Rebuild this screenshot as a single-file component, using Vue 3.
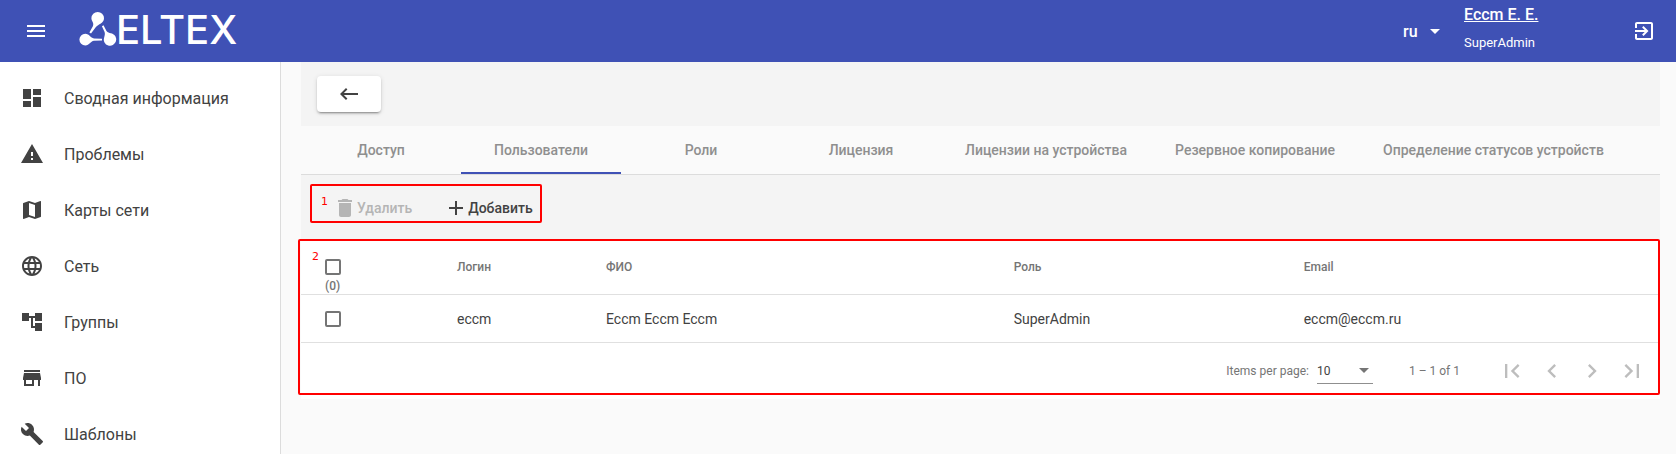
<script setup>
import { ref, computed } from "vue";

const menu = [
  {
    title: "Сводная информация",
    icon: "M3 13h8V3H3v10zm0 8h8v-6H3v6zm10 0h8V11h-8v10zm0-18v6h8V3h-8z",
  },
  {
    title: "Проблемы",
    icon: "M1 21h22L12 2 1 21zm12-3h-2v-2h2v2zm0-4h-2v-4h2v4z",
  },
  {
    title: "Карты сети",
    icon: "M20.5 3l-.16.03L15 5.1 9 3 3.36 4.9c-.21.07-.36.25-.36.48V20.5c0 .28.22.5.5.5l.16-.03L9 18.9l6 2.1 5.64-1.9c.21-.07.36-.25.36-.48V3.5c0-.28-.22-.5-.5-.5zM15 19l-6-2.11V5l6 2.11V19z",
  },
  {
    title: "Сеть",
    icon: "M11.99 2C6.47 2 2 6.48 2 12s4.47 10 9.99 10C17.52 22 22 17.52 22 12S17.52 2 11.99 2zm6.93 6h-2.95c-.32-1.25-.78-2.45-1.38-3.56 1.84.63 3.37 1.91 4.33 3.56zM12 4.04c.83 1.2 1.48 2.53 1.91 3.96h-3.82c.43-1.43 1.08-2.76 1.91-3.96zM4.26 14C4.1 13.36 4 12.69 4 12s.1-1.36.26-2h3.38c-.08.66-.14 1.32-.14 2 0 .68.06 1.34.14 2H4.26zm.82 2h2.95c.32 1.25.78 2.45 1.38 3.56-1.84-.63-3.37-1.9-4.33-3.56zm2.95-8H5.08c.96-1.66 2.49-2.93 4.33-3.56C8.81 5.55 8.35 6.75 8.03 8zM12 19.96c-.83-1.2-1.48-2.53-1.91-3.96h3.82c-.43 1.43-1.08 2.76-1.91 3.96zM14.34 14H9.66c-.09-.66-.16-1.32-.16-2 0-.68.07-1.35.16-2h4.68c.09.65.16 1.32.16 2 0 .68-.07 1.34-.16 2zm.25 5.56c.6-1.11 1.06-2.31 1.38-3.56h2.95c-.96 1.65-2.49 2.93-4.33 3.56zM16.36 14c.08-.66.14-1.32.14-2 0-.68-.06-1.34-.14-2h3.38c.16.64.26 1.31.26 2s-.1 1.36-.26 2h-3.38z",
  },
  {
    title: "Группы",
    icon: "M22 11V3h-7v3H9V3H2v8h7V8h2v10h4v3h7v-8h-7v3h-2V8h2v3z",
  },
  {
    title: "ПО",
    icon: "M20 4H4v2h16V4zm1 10v-2l-1-5H4l-1 5v2h1v6h10v-6h4v6h2v-6h1zm-9 4H6v-4h6v4z",
  },
  {
    title: "Шаблоны",
    icon: "M22.7 19l-9.1-9.1c.9-2.3.4-5-1.5-6.9-2-2-5-2.4-7.4-1.3L9 6 6 9 1.6 4.7C.4 7.1.9 10.1 2.9 12.1c1.9 1.9 4.6 2.4 6.9 1.5l9.1 9.1c.4.4 1 .4 1.4 0l2.3-2.3c.5-.4.5-1.1.1-1.4z",
  },
];

const tabs = [
  "Доступ",
  "Пользователи",
  "Роли",
  "Лицензия",
  "Лицензии на устройства",
  "Резервное копирование",
  "Определение статусов устройств",
];
const activeTab = ref("Пользователи");

const users = [
  { login: "eccm", name: "Eccm Eccm Eccm", role: "SuperAdmin", email: "eccm@eccm.ru" },
];
const selected = ref([]);
const allSelected = computed({
  get: () => selected.value.length === users.length,
  set: (value) => {
    selected.value = value ? users.map((user) => user.login) : [];
  },
});

const pages = [
  {
    title: "First page",
    icon: "M18.41 16.59L13.82 12l4.59-4.59L17 6l-6 6 6 6zM6 6h2v12H6z",
  },
  {
    title: "Previous page",
    icon: "M15.41 7.41L14 6l-6 6 6 6 1.41-1.41L10.83 12z",
  },
  {
    title: "Next page",
    icon: "M10 6L8.59 7.41 13.17 12l-4.58 4.59L10 18l6-6z",
  },
  {
    title: "Last page",
    icon: "M5.59 7.41L10.18 12l-4.59 4.59L7 18l6-6-6-6zM16 6h2v12h-2z",
  },
];

const lang = ref("ru");
const pageSize = ref(10);
</script>

<template>
  <div class="layout">
    <header class="header">
      <button class="icon-button" aria-label="Меню">
        <svg class="icon" viewBox="0 0 24 24">
          <path d="M3 18h18v-2H3v2zm0-5h18v-2H3v2zm0-7v2h18V6H3z" />
        </svg>
      </button>
      <svg class="logo" viewBox="0 -6 168 50">
        <path
          d="M18.700 2a6.300 6.300 0 0 1 6.300 6.300c0 5-5.500 5.700-8.500 9.200l-4.500 6-1.600-1 3.600-6.500c1.200-3.600-1.600-4.600-1.600-7.700A6.300 6.300 0 0 1 18.700 2z"
        />
        <path
          d="M6.300 23.700c4.200 0 5 4.200 8.700 4.700l8 .3v1.800l-8 .3c-3.700.5-4.500 4.700-8.700 4.700a5.900 5.900 0 0 1 0-11.800z"
        />
        <path
          d="M24.500 15.300l3 5.700c2.400 3.200 6.200.800 9 5.600a6.200 6.200 0 1 1-11 5.800c-2-4 1.300-6.500.1-10.400l-2.700-5.800z"
        />
        <text x="37" y="34">ELTEX</text>
      </svg>
      <label class="lang">
        <select v-model="lang" aria-label="Язык">
          <option>ru</option>
        </select>
        <span class="arrow"></span>
      </label>
      <div class="user">
        <a href="#">Eccm E. E.</a>
        <span>SuperAdmin</span>
      </div>
      <button class="icon-button" aria-label="Выход">
        <svg class="icon" viewBox="0 0 24 24">
          <path
            d="M10.090 15.590L11.500 17l5-5-5-5-1.410 1.410L12.670 11H3v2h9.670l-2.580 2.590zM19 3H5c-1.110 0-2 .9-2 2v4h2V5h14v14H5v-4H3v4c0 1.100.89 2 2 2h14c1.100 0 2-.9 2-2V5c0-1.100-.9-2-2-2z"
          />
        </svg>
      </button>
    </header>

    <div class="body">
      <nav class="sidebar">
        <a class="menu-item" href="#" v-for="item in menu" :key="item.title">
          <svg class="icon" viewBox="0 0 24 24"><path :d="item.icon" /></svg>
          {{ item.title }}
        </a>
      </nav>

      <main class="content">
        <div class="back-bar">
          <button class="back" aria-label="Назад">
            <svg class="icon" viewBox="0 0 24 24">
              <path d="M21 11H6.830l3.580-3.590L9 6l-6 6 6 6 1.410-1.410L6.830 13H21z" />
            </svg>
          </button>
        </div>

        <div class="tabs" role="tablist">
          <button
            v-for="tab in tabs"
            :key="tab"
            role="tab"
            :aria-selected="tab === activeTab"
            :class="['tab', tab === activeTab && 'active']"
            @click="activeTab = tab"
          >
            {{ tab }}
          </button>
        </div>

        <div class="toolbar">
          <button class="action" :disabled="selected.length === 0">
            <svg class="icon" viewBox="0 0 24 24">
              <path d="M6 19c0 1.100.9 2 2 2h8c1.100 0 2-.9 2-2V7H6v12zM19 4h-3.500l-1-1h-5l-1 1H5v2h14V4z" />
            </svg>
            Удалить
          </button>
          <button class="action">
            <svg class="icon" viewBox="0 0 24 24">
              <path d="M19 13h-6v6h-2v-6H5v-2h6V5h2v6h6v2z" />
            </svg>
            Добавить
          </button>
          <div class="mark mark-toolbar">1</div>
        </div>

        <section class="panel">
          <table>
            <colgroup>
              <col class="col-check" />
              <col class="col-login" />
              <col class="col-name" />
              <col class="col-role" />
              <col />
            </colgroup>
            <thead>
              <tr>
                <th>
                  <label class="check-all">
                    <input type="checkbox" v-model="allSelected" aria-label="Выбрать все" />
                    <span>({{ selected.length }})</span>
                  </label>
                </th>
                <th>Логин</th>
                <th>ФИО</th>
                <th>Роль</th>
                <th>Email</th>
              </tr>
            </thead>
            <tbody>
              <tr v-for="user in users" :key="user.login">
                <td>
                  <input
                    type="checkbox"
                    v-model="selected"
                    :value="user.login"
                    :aria-label="user.login"
                  />
                </td>
                <td>{{ user.login }}</td>
                <td>{{ user.name }}</td>
                <td>{{ user.role }}</td>
                <td>{{ user.email }}</td>
              </tr>
            </tbody>
          </table>

          <div class="paginator">
            <label for="page-size">Items per page:</label>
            <div class="page-size">
              <select id="page-size" v-model="pageSize">
                <option :value="10">10</option>
                <option :value="20">20</option>
                <option :value="50">50</option>
              </select>
              <span class="arrow"></span>
            </div>
            <span class="range">1 – 1 of 1</span>
            <button
              class="page-button"
              v-for="page in pages"
              :key="page.title"
              :aria-label="page.title"
              disabled
            >
              <svg viewBox="0 0 24 24"><path :d="page.icon" /></svg>
            </button>
          </div>
          <div class="mark mark-table">2</div>
        </section>
      </main>
    </div>
  </div>
</template>

<style>
body {
  margin: 0;
  background: #fafafa;
}
</style>

<style scoped>
.layout {
  height: 100vh;
  display: flex;
  flex-direction: column;
  overflow: hidden;
  font-family: Roboto, "Liberation Sans", sans-serif;
  font-size: 14px;
  color: #424242;
}

.layout * {
  box-sizing: border-box;
}

button,
select {
  margin: 0;
  padding: 0;
  border: none;
  background: none;
  font: inherit;
  color: inherit;
}

select {
  appearance: none;
  outline: none;
}

svg {
  display: block;
  flex-shrink: 0;
  fill: currentColor;
}

.icon {
  width: 24px;
  height: 24px;
}

.arrow {
  border: 5px solid transparent;
  border-top-color: currentColor;
  border-bottom: none;
  pointer-events: none;
}

.header {
  height: 62px;
  flex-shrink: 0;
  display: flex;
  align-items: center;
  padding: 0 20px 0 24px;
  background: #3f51b5;
  color: #fff;
  font-weight: 500;
}

.logo {
  width: 168px;
  height: 50px;
  margin: 0 auto 4px 31px;
}

.logo text {
  font-family: Inter, sans-serif;
  font-size: 40px;
  font-weight: 500;
}

.lang {
  display: flex;
  align-items: center;
  gap: 12px;
  margin-right: 24px;
  font-size: 16px;
}

.user {
  width: 168px;
  display: flex;
  flex-direction: column;
  align-items: flex-start;
  padding-bottom: 4px;
  font-size: 13px;
  font-weight: 400;
  line-height: 28px;
}

.user a {
  font-size: 16px;
  font-weight: 500;
  color: inherit;
}

.body {
  flex: 1;
  min-height: 0;
  display: flex;
}

.sidebar {
  width: 281px;
  flex-shrink: 0;
  padding-top: 8px;
  border-right: 1px solid #dcdcdc;
  background: #fff;
  overflow: hidden;
}

.menu-item {
  height: 56px;
  display: flex;
  align-items: center;
  gap: 20px;
  padding: 0 20px;
  font-size: 16px;
  color: inherit;
  text-decoration: none;
}

.content {
  flex: 1;
  min-width: 0;
  padding: 0 16px 0 20px;
}

.back-bar {
  height: 64px;
  padding: 14px 16px;
  background: #f4f4f4;
}

.back {
  width: 64px;
  height: 36px;
  display: flex;
  align-items: center;
  justify-content: center;
  border-radius: 4px;
  background: #fff;
  box-shadow:
    0 3px 1px -2px rgba(0, 0, 0, 0.2),
    0 2px 2px 0 rgba(0, 0, 0, 0.14),
    0 1px 5px 0 rgba(0, 0, 0, 0.12);
}

.tabs {
  display: flex;
  border-bottom: 1px solid #dcdcdc;
}

.tab {
  min-width: 160px;
  height: 48px;
  padding: 2px 24px 0;
  border-bottom: 2px solid transparent;
  font-weight: 500;
  color: #8f8f8f;
  white-space: nowrap;
}

.tab.active {
  border-color: #3f51b5;
}

.toolbar {
  position: relative;
  height: 65px;
  display: flex;
  align-items: center;
  padding-left: 16px;
  background: #f4f4f4;
}

.action {
  height: 36px;
  display: flex;
  align-items: center;
  padding: 0 16px;
  font-weight: 500;
}

.action:disabled {
  color: #b5b5b5;
}

.panel {
  position: relative;
  background: #fff;
}

table {
  width: 100%;
  table-layout: fixed;
  border-collapse: separate;
  border-spacing: 0;
}

.col-check {
  width: 156px;
}

.col-login {
  width: 149px;
}

.col-name {
  width: 30%;
}

.col-role {
  width: 290px;
}

th,
td {
  padding: 0;
  border-bottom: 1px solid #e0e0e0;
  text-align: left;
}

th:first-child,
td:first-child {
  padding-left: 24px;
}

th {
  height: 55px;
  font-size: 12px;
  font-weight: 500;
  color: #757575;
}

td {
  height: 48px;
}

input[type="checkbox"] {
  appearance: none;
  display: block;
  width: 16px;
  height: 16px;
  margin: 0;
  border: 2px solid #757575;
  border-radius: 2px;
}

input[type="checkbox"]:checked {
  background: #3f51b5;
  border-color: #3f51b5;
}

.check-all {
  display: flex;
  flex-direction: column;
  gap: 3px;
  padding-top: 19px;
  line-height: 16px;
}

.paginator {
  height: 56px;
  display: flex;
  align-items: center;
  justify-content: flex-end;
  padding-right: 8px;
  font-size: 12px;
  color: #757575;
}

.page-size {
  width: 56px;
  display: flex;
  align-items: center;
  margin: 0 36px 0 8px;
  padding-right: 4px;
  border-bottom: 1px solid #8f8f8f;
}

.page-size select {
  flex: 1;
  height: 24px;
  color: #424242;
}

.range {
  margin-right: 32px;
}

.page-button {
  width: 40px;
  height: 40px;
  display: flex;
  align-items: center;
  justify-content: center;
  color: #bdbdbd;
}

.page-button svg {
  width: 28px;
  height: 28px;
}

/* numbered callouts over the page */
.mark {
  position: absolute;
  border: 2px solid #f00;
  border-radius: 2px;
  font-family: "DejaVu Sans", sans-serif;
  font-size: 11px;
  line-height: 12px;
  color: #f00;
  pointer-events: none;
}

.mark-toolbar {
  top: 9px;
  left: 9px;
  width: 232px;
  height: 39px;
  padding: 10px 9px;
}

.mark-table {
  top: -1px;
  right: 0;
  bottom: 4px;
  left: -3px;
  padding: 10px 12px;
}
</style>
